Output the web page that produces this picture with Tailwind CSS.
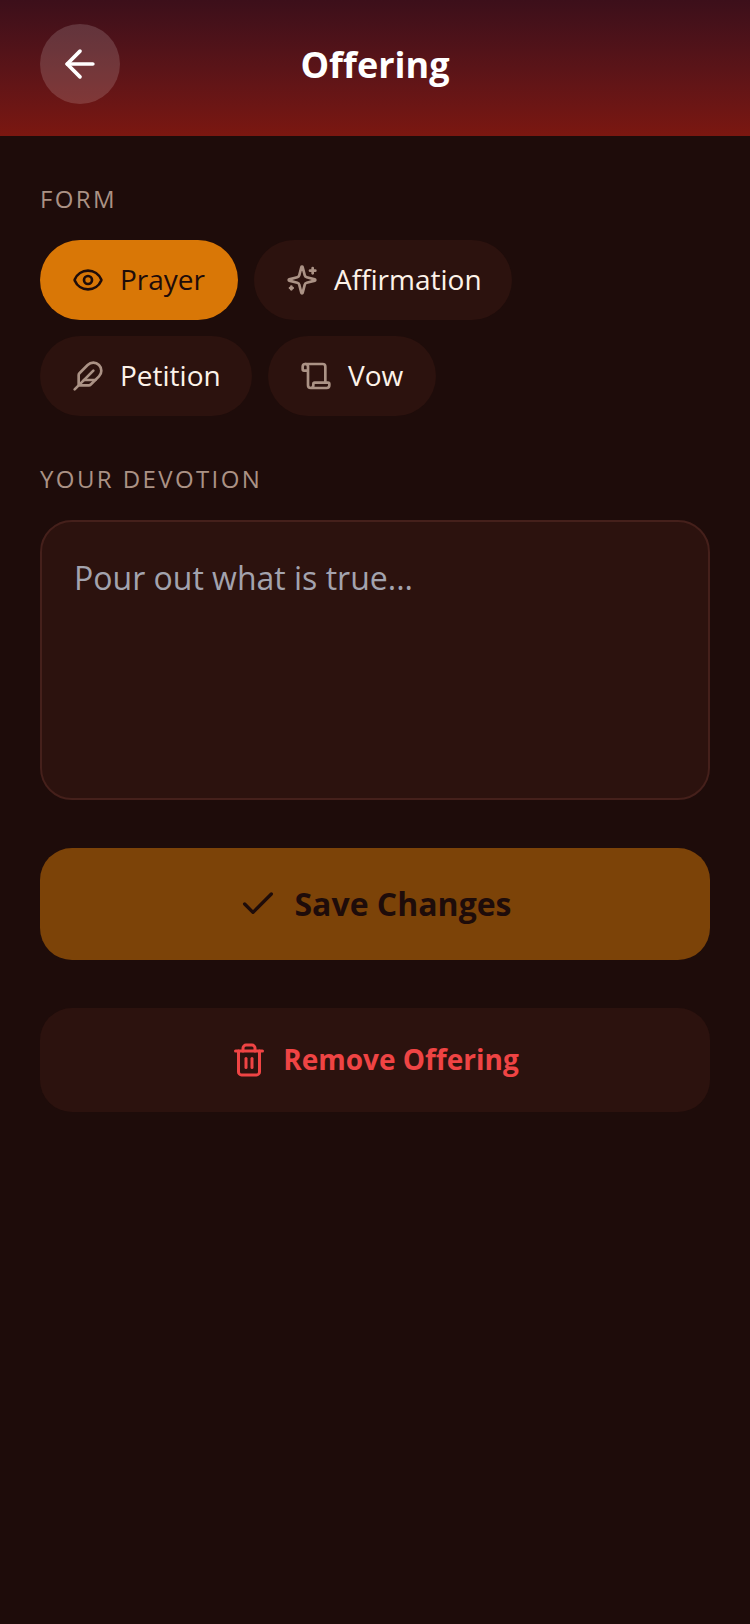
<!DOCTYPE html>
<html><head><meta charset="utf-8"><script src="https://cdn.jsdelivr.net/npm/@tailwindcss/browser@4"></script></head>
<body class="m-0">
<div class="w-[750px] h-[1624px] bg-[#1e0c0a] font-['Open_Sans',sans-serif] flex flex-col overflow-hidden">
  <header class="h-[136px] shrink-0 px-10 pt-6 bg-gradient-to-b from-[#3c0f1a] to-[#7b1710] flex items-start">
    <div class="w-20 h-20 rounded-full bg-white/15 flex items-center justify-center">
      <svg class="w-11 h-11 text-white" viewBox="0 0 24 24" fill="none" stroke="currentColor" stroke-width="2" stroke-linecap="round" stroke-linejoin="round"><path d="m12 19-7-7 7-7"/><path d="M19 12H5"/></svg>
    </div>
    <h1 class="flex-1 text-center text-[36px] leading-[82px] font-bold text-white pr-20">Offering</h1>
  </header>
  <main class="px-10 flex flex-col">
    <div class="mt-[47px] text-[24px] leading-[32px] tracking-[2.4px] text-[#ab9285]">FORM</div>
    <div class="mt-[25px] flex flex-wrap gap-4">
      <div class="w-[198px] h-20 px-8 rounded-full bg-[#d97706] text-[#1e0c0a] flex items-center gap-4 text-[28px] whitespace-nowrap">
        <svg class="w-8 h-8 shrink-0" viewBox="0 0 24 24" fill="none" stroke="currentColor" stroke-width="2" stroke-linecap="round" stroke-linejoin="round"><path d="M2.062 12.348a1 1 0 0 1 0-.696 10.75 10.75 0 0 1 19.876 0 1 1 0 0 1 0 .696 10.75 10.75 0 0 1-19.876 0"/><circle cx="12" cy="12" r="3"/></svg>
        <span class="mb-[2px]">Prayer</span>
      </div>
      <div class="w-[258px] h-20 px-8 rounded-full bg-[#2c120e] text-[#fdf2e9] flex items-center gap-4 text-[28px] whitespace-nowrap">
        <svg class="w-8 h-8 shrink-0 text-[#ab9285]" viewBox="0 0 24 24" fill="none" stroke="currentColor" stroke-width="2" stroke-linecap="round" stroke-linejoin="round"><path d="M9.937 15.5A2 2 0 0 0 8.5 14.063l-6.135-1.582a.5.5 0 0 1 0-.962L8.5 9.936A2 2 0 0 0 9.937 8.5l1.582-6.135a.5.5 0 0 1 .963 0L14.063 8.5A2 2 0 0 0 15.5 9.937l6.135 1.581a.5.5 0 0 1 0 .964L15.5 14.063a2 2 0 0 0-1.437 1.437l-1.582 6.135a.5.5 0 0 1-.963 0z"/><path d="M20 3v4"/><path d="M22 5h-4"/><path d="M4 17v2"/><path d="M5 18H3"/></svg>
        <span class="mb-[2px]">Affirmation</span>
      </div>
      <div class="w-[212px] h-20 px-8 rounded-full bg-[#2c120e] text-[#fdf2e9] flex items-center gap-4 text-[28px] whitespace-nowrap">
        <svg class="w-8 h-8 shrink-0 text-[#ab9285]" viewBox="0 0 24 24" fill="none" stroke="currentColor" stroke-width="2" stroke-linecap="round" stroke-linejoin="round"><path d="M12.67 19a2 2 0 0 0 1.416-.588l6.154-6.172a6 6 0 0 0-8.49-8.49L5.586 9.914A2 2 0 0 0 5 11.328V18a1 1 0 0 0 1 1z"/><path d="M16 8 2 22"/><path d="M17.5 15H9"/></svg>
        <span class="mb-[2px]">Petition</span>
      </div>
      <div class="w-[168px] h-20 px-8 rounded-full bg-[#2c120e] text-[#fdf2e9] flex items-center gap-4 text-[28px] whitespace-nowrap">
        <svg class="w-8 h-8 shrink-0 text-[#ab9285]" viewBox="0 0 24 24" fill="none" stroke="currentColor" stroke-width="2" stroke-linecap="round" stroke-linejoin="round"><path d="M19 17V5a2 2 0 0 0-2-2H4"/><path d="M8 21h12a2 2 0 0 0 2-2v-1a1 1 0 0 0-1-1H11a1 1 0 0 0-1 1v1a2 2 0 1 1-4 0V5a2 2 0 1 0-4 0v2a1 1 0 0 0 1 1h3"/></svg>
        <span class="mb-[2px]">Vow</span>
      </div>
    </div>
    <div class="mt-[47px] text-[24px] leading-[32px] tracking-[2.4px] text-[#ab9285]">YOUR DEVOTION</div>
    <div class="mt-[25px] h-[280px] rounded-[32px] border-2 border-[#45201b] bg-[#2c120e] px-8 pt-[34px] text-[32px] leading-[44px] text-[#a3a3ae]">Pour out what is true...</div>
    <div class="mt-12 h-[112px] rounded-[32px] bg-[#7c4308] flex items-center justify-center gap-4 text-[#1e0c0a] text-[32px] font-bold">
      <svg class="w-10 h-10 shrink-0" viewBox="0 0 24 24" fill="none" stroke="currentColor" stroke-width="2" stroke-linecap="round" stroke-linejoin="round"><path d="M20 6 9 17l-5-5"/></svg>
      <span>Save Changes</span>
    </div>
    <div class="mt-12 h-[104px] rounded-[32px] bg-[#2c120e] flex items-center justify-center gap-4 text-[#ef4444] text-[28px] font-bold">
      <svg class="w-9 h-9 shrink-0" viewBox="0 0 24 24" fill="none" stroke="currentColor" stroke-width="2" stroke-linecap="round" stroke-linejoin="round"><path d="M3 6h18"/><path d="M19 6v14c0 1-1 2-2 2H7c-1 0-2-1-2-2V6"/><path d="M8 6V4c0-1 1-2 2-2h4c1 0 2 1 2 2v2"/><line x1="10" x2="10" y1="11" y2="17"/><line x1="14" x2="14" y1="11" y2="17"/></svg>
      <span class="mb-[2px]">Remove Offering</span>
    </div>
  </main>
</div>
</body></html>
